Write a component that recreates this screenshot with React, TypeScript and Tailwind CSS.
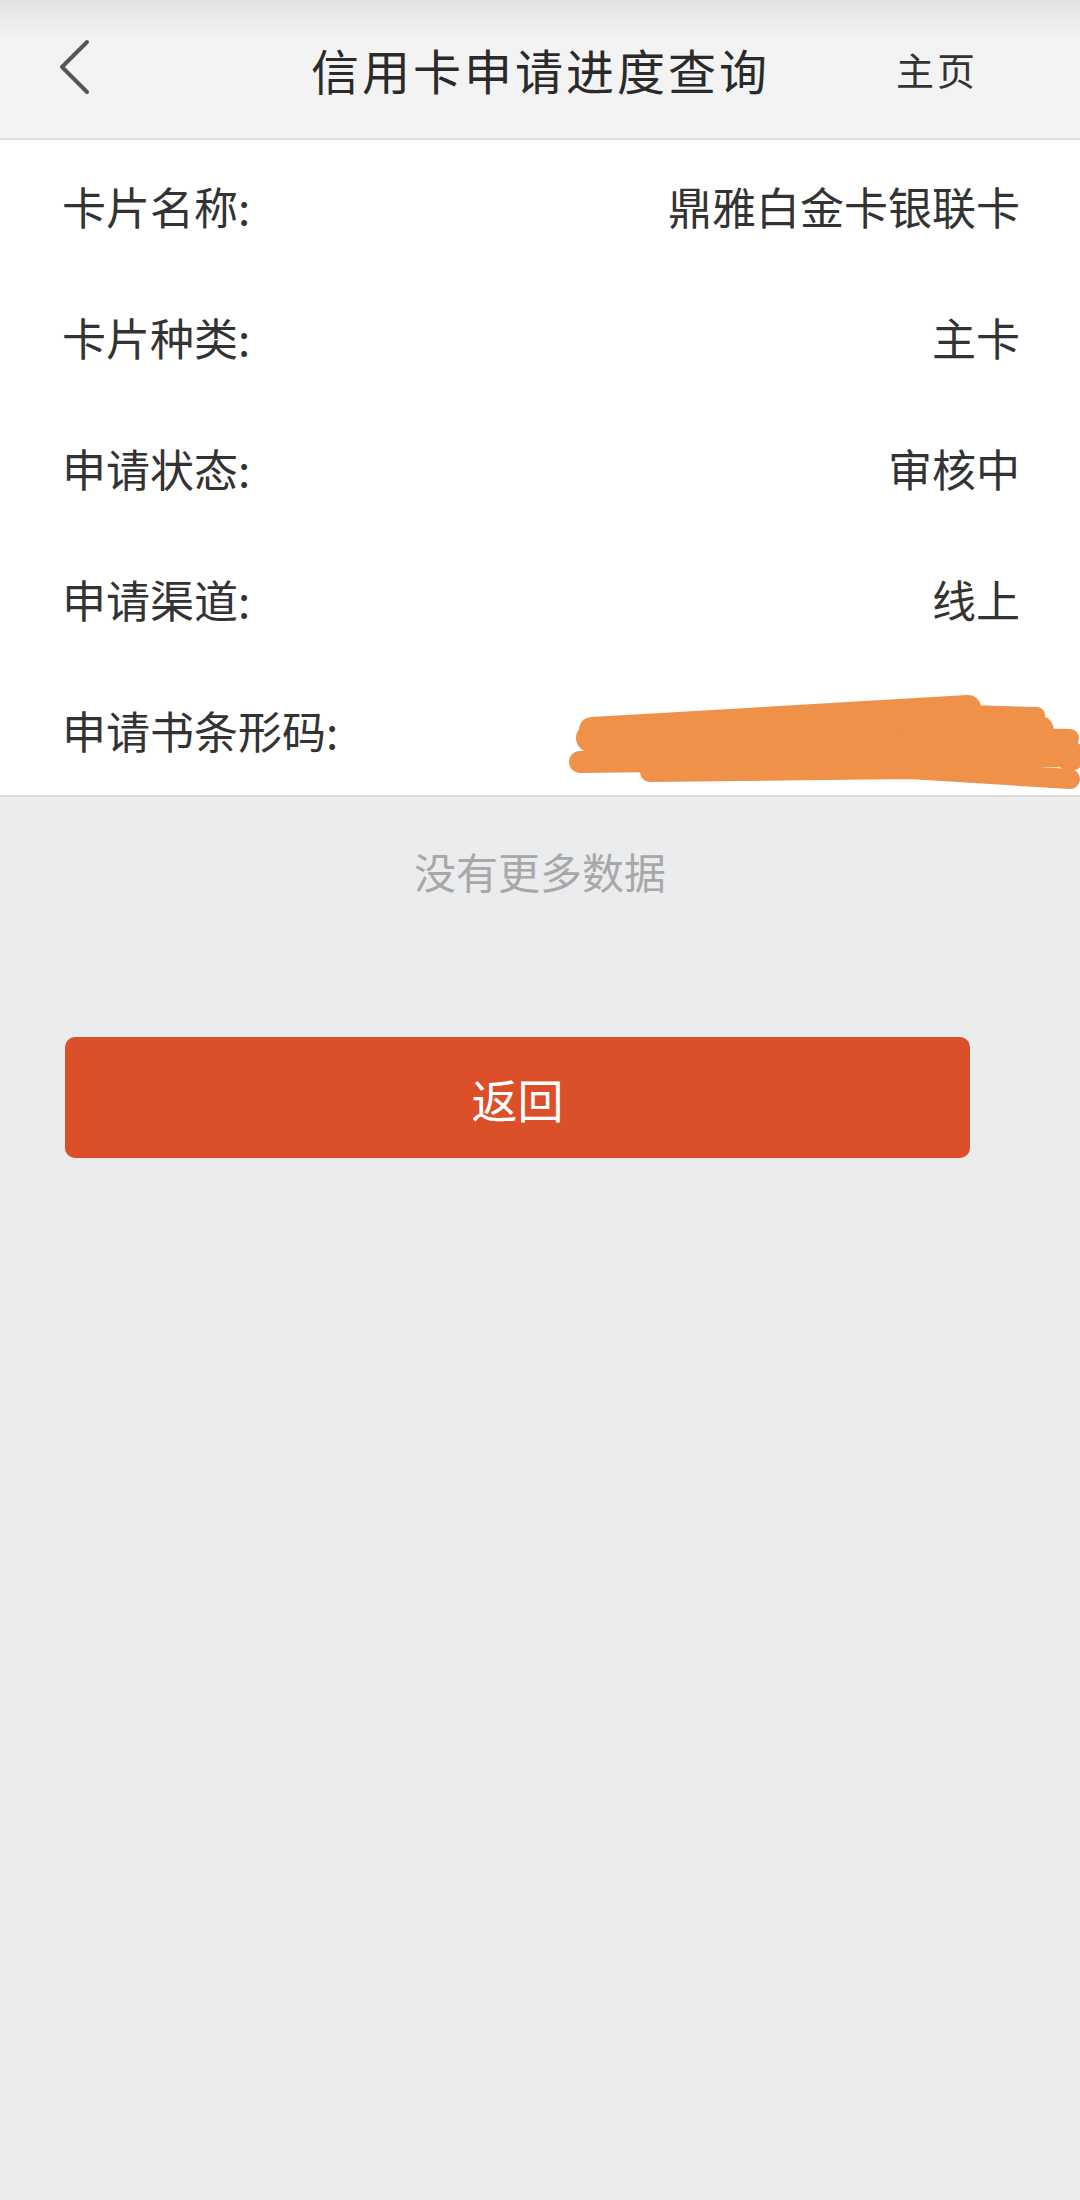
const rows: { label: string; value: string }[] = [
  { label: "卡片名称:", value: "鼎雅白金卡银联卡" },
  { label: "卡片种类:", value: "主卡" },
  { label: "申请状态:", value: "审核中" },
  { label: "申请渠道:", value: "线上" },
  { label: "申请书条形码:", value: "" },
];

function Scribble() {
  // orange marker strokes covering the barcode number
  return (
    <svg
      className="absolute left-[560px] top-[16px]"
      width="520"
      height="117"
      viewBox="0 0 520 117"
      fill="none"
      stroke="#f0914a"
      strokeLinecap="round"
      strokeLinejoin="round"
    >
      <path d="M32 50 L408 28" strokeWidth="26" />
      <path d="M408 33 L477 35" strokeWidth="16" />
      <path d="M30 58 L420 44 L480 50" strokeWidth="28" />
      <path d="M345 55 L510 58" strokeWidth="18" />
      <path d="M40 68 L500 66 L510 76" strokeWidth="30" />
      <path d="M20 82 L510 76" strokeWidth="22" />
      <path d="M90 92 L350 89 L510 99" strokeWidth="20" />
    </svg>
  );
}

export default function App() {
  return (
    <div
      className="min-h-[2200px] w-[1080px] bg-[#ebecee] text-[#333]"
      style={{ fontFamily: '"Noto Sans CJK SC", "Noto Sans", sans-serif' }}
    >
      <header className="relative flex h-[140px] items-center border-b-2 border-[#dedede] bg-[linear-gradient(to_bottom,#e3e3e3_0px,#f3f3f3_38px)]">
        <button type="button" className="absolute left-[56px] top-[38px] p-0">
          <svg width="36" height="58" viewBox="0 0 36 58" fill="none">
            <path d="M31 4 L6 29 L31 54" stroke="#555" strokeWidth="4" strokeLinecap="round" strokeLinejoin="round" />
          </svg>
        </button>
        <h1 className="ml-[311px] text-[48px] leading-none tracking-[3px] text-[#2a2a2a]">信用卡申请进度查询</h1>
        <span className="ml-auto mr-[102px] text-[38px] leading-none tracking-[3px] text-[#333]">主页</span>
      </header>

      <div className="border-b-2 border-[#dcdcdc] bg-white">
        {rows.map((r) => (
          <div key={r.label} className="relative flex h-[131px] items-center justify-between pl-[62px] pr-[60px] text-[44px] leading-none">
            <span>{r.label}</span>
            <span>{r.value}</span>
            {r.value === "" && <Scribble />}
          </div>
        ))}
      </div>

      <p className="mt-[53px] text-center text-[42px] leading-none text-[#a8a8a8]">没有更多数据</p>

      <button
        type="button"
        className="ml-[65px] mt-[145px] flex h-[121px] w-[905px] items-center justify-center rounded-[10px] bg-[#db4f29] text-[46px] leading-none text-white"
      >
        返回
      </button>
    </div>
  );
}
